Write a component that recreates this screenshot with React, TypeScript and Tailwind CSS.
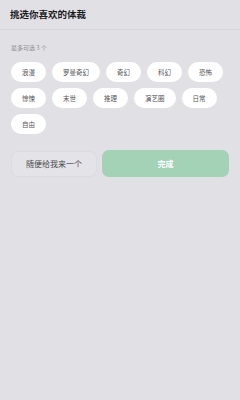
const genres = [
  "浪漫",
  "罗曼奇幻",
  "奇幻",
  "科幻",
  "恐怖",
  "惊悚",
  "末世",
  "推理",
  "演艺圈",
  "日常",
  "自由",
];

const App = () => {
  return (
    <div
      className="w-[240px] h-[400px] bg-[#e1e0e5] overflow-hidden"
      style={{ fontFamily: '"Noto Sans CJK SC", "Noto Sans", sans-serif' }}
    >
      <div className="h-[30px] px-[10px] flex items-center border-b border-[#d8d7dc]">
        <h2 className="text-[9.5px] font-bold text-[#1c1c1e] leading-none">
          挑选你喜欢的体裁
        </h2>
      </div>

      <div className="px-[11px]">
        <p className="pt-[10px] h-[21px] flex items-end text-[6px] leading-none text-[#8c8b90]">
          最多可选 3 个
        </p>

        <div className="mt-[11px] flex flex-wrap gap-[6px]">
          {genres.map((g) => (
            <div
              key={g}
              className="h-[20px] px-[11px] rounded-full bg-white flex items-center text-[6.5px] leading-none text-[#555458]"
            >
              {g}
            </div>
          ))}
        </div>

        <div className="mt-[17px] flex gap-[5px]">
          <button className="w-[86px] h-[26px] rounded-[7px] bg-[#e4e3e8] border border-[#dcdbe0] text-[8px] text-[#4a494d] flex items-center justify-center">
            随便给我来一个
          </button>
          <button className="flex-1 h-[27px] -mt-[1px] rounded-[7px] bg-[#a3d2b7] text-[8px] font-bold text-white flex items-center justify-center">
            完成
          </button>
        </div>
      </div>
    </div>
  );
};

export default App;
